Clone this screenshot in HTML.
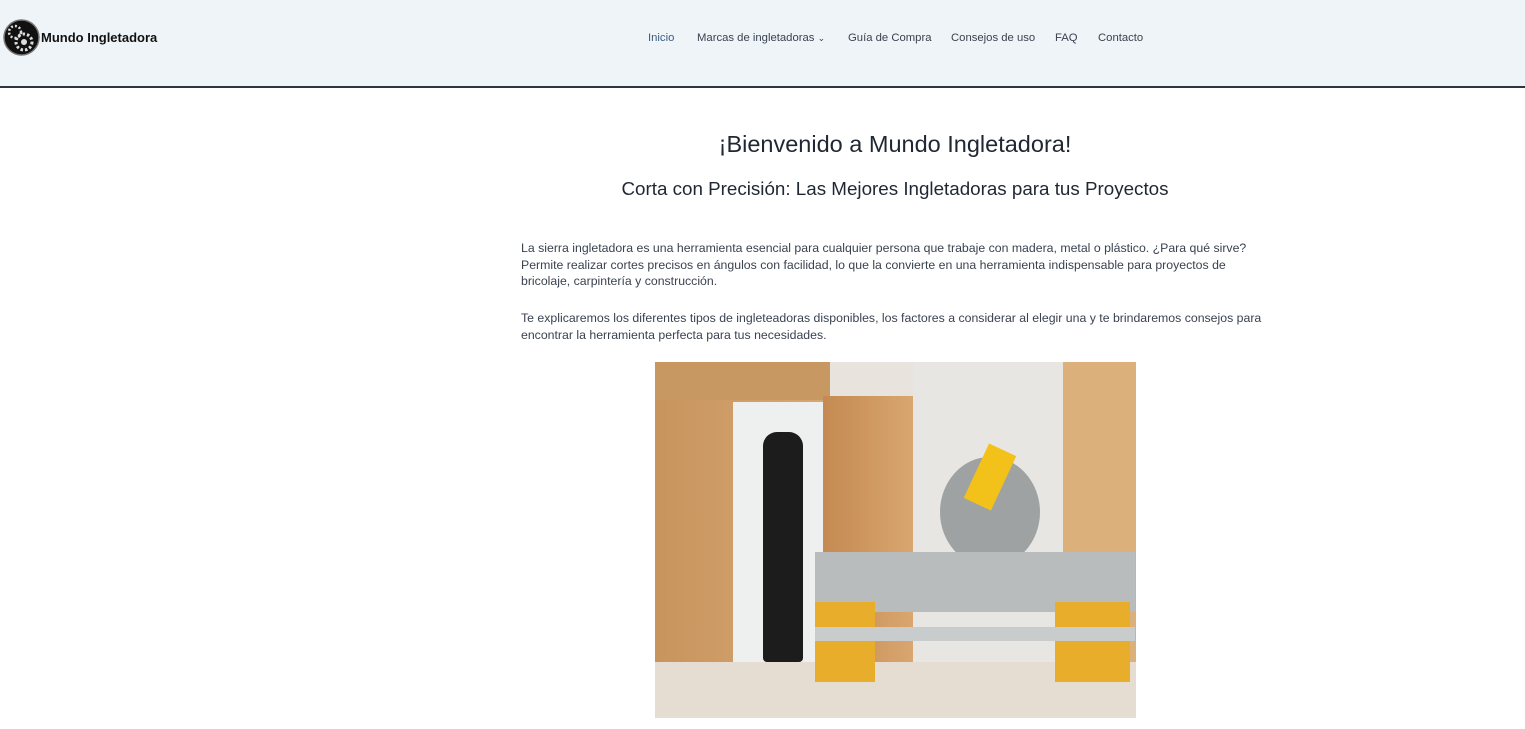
<!DOCTYPE html>
<html><head><meta charset="utf-8"><style>
body{margin:0;width:1525px;height:729px;overflow:hidden;background:#fff;font-family:"Liberation Sans",sans-serif;color:#2b2f36}
.hdr{position:absolute;left:0;top:0;width:1525px;height:86px;background:#eff4f8;border-bottom:2px solid #2e3440}
.logo{position:absolute;left:3px;top:19px}
.brand{position:absolute;left:41px;top:30px;font-weight:bold;font-size:13px;color:#111}
.nav{position:absolute;top:32px;font-size:11.3px;color:#3a4250}
h1{position:absolute;left:0;width:1790px;text-align:center;top:131px;margin:0;font-size:23.5px;font-weight:normal;color:#1f2733}
h2{position:absolute;left:0;width:1790px;text-align:center;top:178px;margin:0;font-size:18.8px;font-weight:normal;color:#1f2733}
p{position:absolute;left:521px;width:750px;margin:0;font-size:12.3px;line-height:16.5px;color:#3a4250}
.img{position:absolute;left:655px;top:362px;width:481px;height:356px;overflow:hidden;background:#e8e3dc}
.img div{position:absolute}
</style></head><body>
<div class="hdr">
<svg class="logo" width="37" height="37" viewBox="0 0 37 37"><circle cx="18.5" cy="18.5" r="17.5" fill="#111" stroke="#777" stroke-width="1.5"/><circle cx="12" cy="13" r="6" fill="none" stroke="#ddd" stroke-width="2.5" stroke-dasharray="2 2"/><circle cx="21" cy="23" r="8" fill="none" stroke="#ddd" stroke-width="3" stroke-dasharray="2.5 2"/><circle cx="21" cy="23" r="3" fill="#ddd"/></svg>
<div class="brand">Mundo Ingletadora</div>
<div class="nav" style="left:648px;color:#3d5a80">Inicio</div>
<div class="nav" style="left:697px">Marcas de ingletadoras <span style="font-size:9px">&#8964;</span></div>
<div class="nav" style="left:848px">Guía de Compra</div>
<div class="nav" style="left:951px">Consejos de uso</div>
<div class="nav" style="left:1055px">FAQ</div>
<div class="nav" style="left:1098px">Contacto</div>
</div>
<h1>¡Bienvenido a Mundo Ingletadora!</h1>
<h2>Corta con Precisión: Las Mejores Ingletadoras para tus Proyectos</h2>
<p style="top:240px">La sierra ingletadora es una herramienta esencial para cualquier persona que trabaje con madera, metal o plástico. ¿Para qué sirve? Permite realizar cortes precisos en ángulos con facilidad, lo que la convierte en una herramienta indispensable para proyectos de bricolaje, carpintería y construcción.</p>
<p style="top:310px">Te explicaremos los diferentes tipos de ingleteadoras disponibles, los factores a considerar al elegir una y te brindaremos consejos para encontrar la herramienta perfecta para tus necesidades.</p>
<div class="img">
<div style="left:0;top:0;width:175px;height:310px;background:linear-gradient(90deg,#c8945e,#d7a774)"></div>
<div style="left:0;top:0;width:175px;height:38px;background:#c89862"></div>
<div style="left:78px;top:40px;width:92px;height:270px;background:#eef0f0"></div>
<div style="left:168px;top:34px;width:90px;height:276px;background:linear-gradient(90deg,#c48a52,#d9a66f)"></div>
<div style="left:258px;top:0;width:150px;height:310px;background:#e8e6e2"></div>
<div style="left:408px;top:0;width:73px;height:310px;background:#dcb07a"></div>
<div style="left:0;top:300px;width:481px;height:56px;background:#e6ddd2"></div>
<div style="left:108px;top:70px;width:40px;height:230px;background:#1c1c1c;border-radius:14px 14px 4px 4px"></div>
<div style="left:285px;top:95px;width:100px;height:110px;background:#9ea2a2;border-radius:50%"></div>
<div style="left:320px;top:85px;width:30px;height:60px;background:#f2c21b;transform:rotate(25deg)"></div>
<div style="left:160px;top:190px;width:320px;height:60px;background:#b8bcbc"></div>
<div style="left:160px;top:240px;width:60px;height:80px;background:#e8ad2a"></div>
<div style="left:400px;top:240px;width:75px;height:80px;background:#e8ad2a"></div>
<div style="left:160px;top:265px;width:320px;height:14px;background:#c9cccc"></div>
</div>
</body></html>
